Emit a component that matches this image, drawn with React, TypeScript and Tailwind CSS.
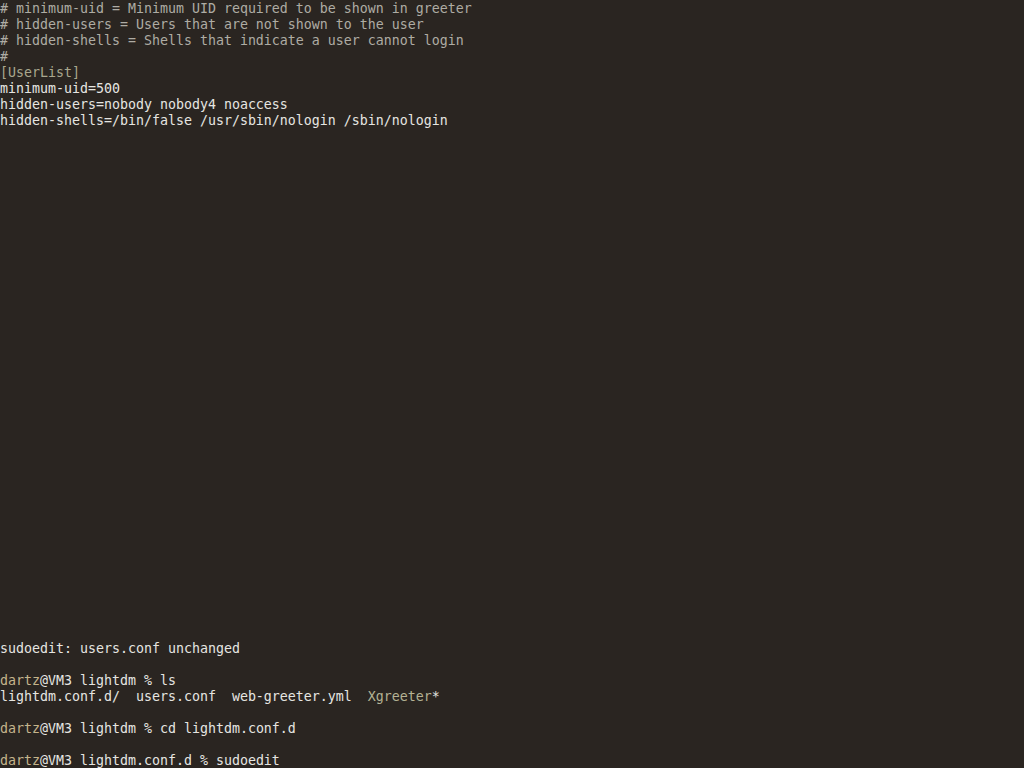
import React from 'react';

type Seg = { t: string; c?: string };

const COMMENT = 'text-[#aeaca4]';
const SECTION = 'text-[#a9a78e]';
const USER = 'text-[#c4b48c]';
const EXEC = 'text-[#b4b294]';

const TOP: Seg[][] = [
  [{ t: '# minimum-uid = Minimum UID required to be shown in greeter', c: COMMENT }],
  [{ t: '# hidden-users = Users that are not shown to the user', c: COMMENT }],
  [{ t: '# hidden-shells = Shells that indicate a user cannot login', c: COMMENT }],
  [{ t: '#', c: COMMENT }],
  [{ t: '[UserList]', c: SECTION }],
  [{ t: 'minimum-uid=500' }],
  [{ t: 'hidden-users=nobody nobody4 noaccess' }],
  [{ t: 'hidden-shells=/bin/false /usr/sbin/nologin /sbin/nologin' }],
];

const BOTTOM: Seg[][] = [
  [{ t: 'sudoedit: users.conf unchanged' }],
  [],
  [{ t: 'dartz', c: USER }, { t: '@VM3 lightdm % ls' }],
  [
    { t: 'lightdm.conf.d/  users.conf  web-greeter.yml  ' },
    { t: 'Xgreeter', c: EXEC },
    { t: '*' },
  ],
  [],
  [{ t: 'dartz', c: USER }, { t: '@VM3 lightdm % cd lightdm.conf.d' }],
  [],
  [{ t: 'dartz', c: USER }, { t: '@VM3 lightdm.conf.d % sudoedit' }],
];

const Line = ({ segs }: { segs: Seg[] }) => (
  <div className="h-4 leading-4 whitespace-pre">
    {segs.map((s, i) => (
      <span key={i} className={s.c}>
        {s.t}
      </span>
    ))}
  </div>
);

export default function App() {
  return (
    <div
      className="w-[1024px] h-[768px] overflow-hidden bg-[#2a2521] text-[#e6e5e1] text-[13.29px] flex flex-col justify-between"
      style={{ fontFamily: '"DejaVu Sans Mono", "Liberation Mono", monospace' }}
    >
      <div className="pt-[1px]">
        {TOP.map((l, i) => (
          <Line key={i} segs={l} />
        ))}
      </div>
      <div className="-mb-[1px]">
        {BOTTOM.map((l, i) => (
          <Line key={i} segs={l} />
        ))}
      </div>
    </div>
  );
}
